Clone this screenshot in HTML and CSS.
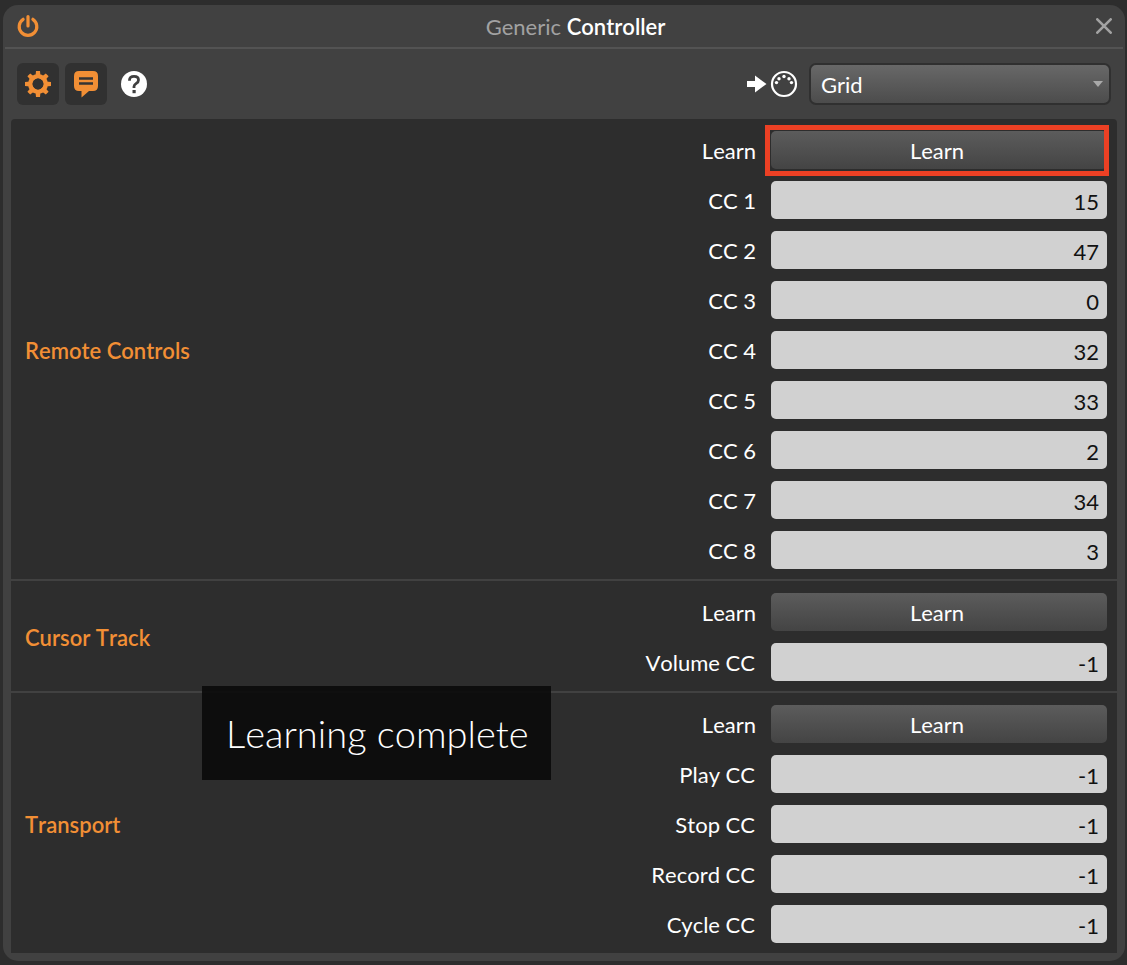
FILE: index.html
```html
<!DOCTYPE html>
<html lang="en">
<head>
<meta charset="utf-8">
<title>Generic Controller</title>
<link rel="stylesheet" href="styles.css">
</head>
<body>
<main class="window">
  <header class="titlebar">
    <svg class="power" width="24" height="24" viewBox="0 0 24 24"><path d="M7.1 5.3A8.8 8.8 0 1 0 16.900 5.3M12 2.600V12" fill="none" stroke="#f28f35" stroke-width="3.200" stroke-linecap="round"/></svg>
    <h1 class="title"><span class="vendor">Generic</span> <span class="product">Controller</span></h1>
    <svg class="close" width="16" height="16" viewBox="0 0 16 16"><path d="M1.300 1.300 14.700 14.700M14.700 1.300 1.300 14.700" stroke="#a2a2a2" stroke-width="2.600" stroke-linecap="round"/></svg>
  </header>
  <div class="toolbar">
    <div class="tool"><svg width="26" height="26" viewBox="-13 -13 26 26"><g fill="#f28f35"><g id="teeth"><path d="M-2-13H2L2.500-8H-2.500ZM-2 13H2L2.500 8H-2.500ZM-13-2V2L-8 2.500V-2.500ZM13-2V2L8 2.500V-2.500Z"/></g><use href="#teeth" transform="rotate(45)"/></g><circle r="7.700" fill="none" stroke="#f28f35" stroke-width="4.600"/><circle r="5.400" fill="#313131"/></svg></div>
    <div class="tool"><svg width="26" height="28" viewBox="0 0 26 28"><path d="M6 1H20Q25 1 25 6V16Q25 21 20 21H16L8.500 27.500V21H6Q1 21 1 16V6Q1 1 6 1Z" fill="#f28f35"/><path d="M6 8.500H20M6 13.500H20" stroke="#343434" stroke-width="2.400"/></svg></div>
    <svg class="help" width="26" height="26" viewBox="0 0 26 26"><circle cx="13" cy="13" r="13" fill="#fff"/><path d="M8.500 9.800V9Q8.500 5.300 13 5.300T17.500 9Q17.500 11 15.300 12.400T13 15.500V17" fill="none" stroke="#404040" stroke-width="2.800"/><path d="M11.500 19H14.700V22.200H11.500Z" fill="#404040"/></svg>
    <svg class="midi" width="51" height="28" viewBox="0 0 51 28"><path d="M0 11H8V5.500L19.500 14 8 22.500V17H0Z" fill="#fff"/><circle cx="37" cy="14" r="12" fill="none" stroke="#fff" stroke-width="2.200"/><g fill="#fff"><circle cx="29.500" cy="12.600" r="1.700"/><circle cx="32" cy="8.700" r="1.700"/><circle cx="37" cy="6.500" r="1.700"/><circle cx="42" cy="8.700" r="1.700"/><circle cx="44.500" cy="12.600" r="1.700"/></g></svg>
    <div class="select"><span class="choice">Grid</span><svg width="10" height="6" viewBox="0 0 10 6"><path d="M0 0H10L5 6Z" fill="#a9a9a9"/></svg></div>
  </div>
  <div class="content">
    <section class="section">
      <h2 class="heading">Remote Controls</h2>
      <div class="fields">
        <span class="label">Learn</span><div class="button highlighted">Learn</div>
        <span class="label">CC 1</span><div class="value">15</div>
        <span class="label">CC 2</span><div class="value">47</div>
        <span class="label">CC 3</span><div class="value">0</div>
        <span class="label">CC 4</span><div class="value">32</div>
        <span class="label">CC 5</span><div class="value">33</div>
        <span class="label">CC 6</span><div class="value">2</div>
        <span class="label">CC 7</span><div class="value">34</div>
        <span class="label">CC 8</span><div class="value">3</div>
      </div>
    </section>
    <section class="section">
      <h2 class="heading">Cursor Track</h2>
      <div class="fields">
        <span class="label">Learn</span><div class="button">Learn</div>
        <span class="label named">Volume CC</span><div class="value">-1</div>
      </div>
    </section>
    <section class="section">
      <h2 class="heading">Transport</h2>
      <div class="fields">
        <span class="label">Learn</span><div class="button">Learn</div>
        <span class="label named">Play CC</span><div class="value">-1</div>
        <span class="label named">Stop CC</span><div class="value">-1</div>
        <span class="label named">Record CC</span><div class="value">-1</div>
        <span class="label named">Cycle CC</span><div class="value">-1</div>
      </div>
    </section>
  </div>
</main>
<div class="toast">Learning complete</div>
</body>
</html>
```
FILE: styles.css
```css
* { box-sizing: border-box; }
body {
  margin: 0;
  height: 965px;
  padding: 5px 2px 4px 3px;
  background: #2d2d2d;
  color: #fff;
  font: 22px/38px Lato, sans-serif;
  font-kerning: none;
  overflow: hidden;
}
svg { display: block; flex: none; }
.window {
  height: 956px;
  padding: 0 8px;
  border-radius: 15px;
  background: #414141;
}
.titlebar {
  display: grid;
  grid-template-columns: 24px 1fr 24px;
  align-items: center;
  height: 44px;
  margin: 0 -6px;
  padding: 0 11px;
  border-bottom: 2px solid #535353;
}
.title {
  margin: 0;
  padding: 2px 0 0 23px;
  text-align: center;
  font-size: 22px;
  font-weight: 400;
}
.vendor { color: #a2a2a2; }
.product { font-weight: 600; }
.power { margin-top: -1px; }
.close { justify-self: end; }
.toolbar {
  display: flex;
  align-items: center;
  height: 70px;
  padding: 0 6px;
}
.tool {
  display: flex;
  align-items: center;
  justify-content: center;
  width: 42px;
  height: 42px;
  margin-right: 6px;
  border-radius: 6px;
  background: #313131;
}
.help { margin-left: 8px; }
.midi { margin-left: auto; }
.select {
  display: flex;
  align-items: center;
  justify-content: space-between;
  width: 302px;
  height: 42px;
  margin-left: 11px;
  padding: 0 6px 0 10px;
  border: 2px solid #303030;
  border-radius: 7px;
  background: linear-gradient(#686868, #4c4c4c);
}
.choice { padding-top: 2px; }
.content {
  border-radius: 4px 4px 0 0;
  background: #2d2d2d;
}
.section {
  display: flex;
  align-items: center;
  justify-content: space-between;
  padding: 12px 10px 10px 14px;
}
.section + .section { border-top: 2px solid #414141; }
.heading {
  margin: 0;
  padding-top: 2px;
  color: #f28f35;
  font-size: 22px;
  font-weight: 600;
}
.fields {
  display: grid;
  grid-template-columns: auto 336px;
  grid-auto-rows: 38px;
  gap: 12px 15px;
}
.label {
  padding-top: 1px;
  text-align: right;
}
.named { padding-right: 1px; }
.button, .value { border-radius: 5px; }
.button {
  padding: 1px 4px 0 0;
  background: linear-gradient(#5c5c5c, #444);
  text-align: center;
}
.highlighted { position: relative; }
.highlighted::after {
  content: "";
  position: absolute;
  inset: -6px -2px -7px -6px;
  border: 5px solid #ec4024;
}
.value {
  padding: 2px 8px 0 0;
  background: #d1d1d1;
  color: #111;
  text-align: right;
}
.toast {
  position: absolute;
  left: 202px;
  top: 686px;
  width: 349px;
  height: 94px;
  padding-left: 24px;
  background: rgba(10, 10, 10, .9);
  font-size: 38px;
  font-weight: 300;
  line-height: 94px;
  white-space: nowrap;
}
```
